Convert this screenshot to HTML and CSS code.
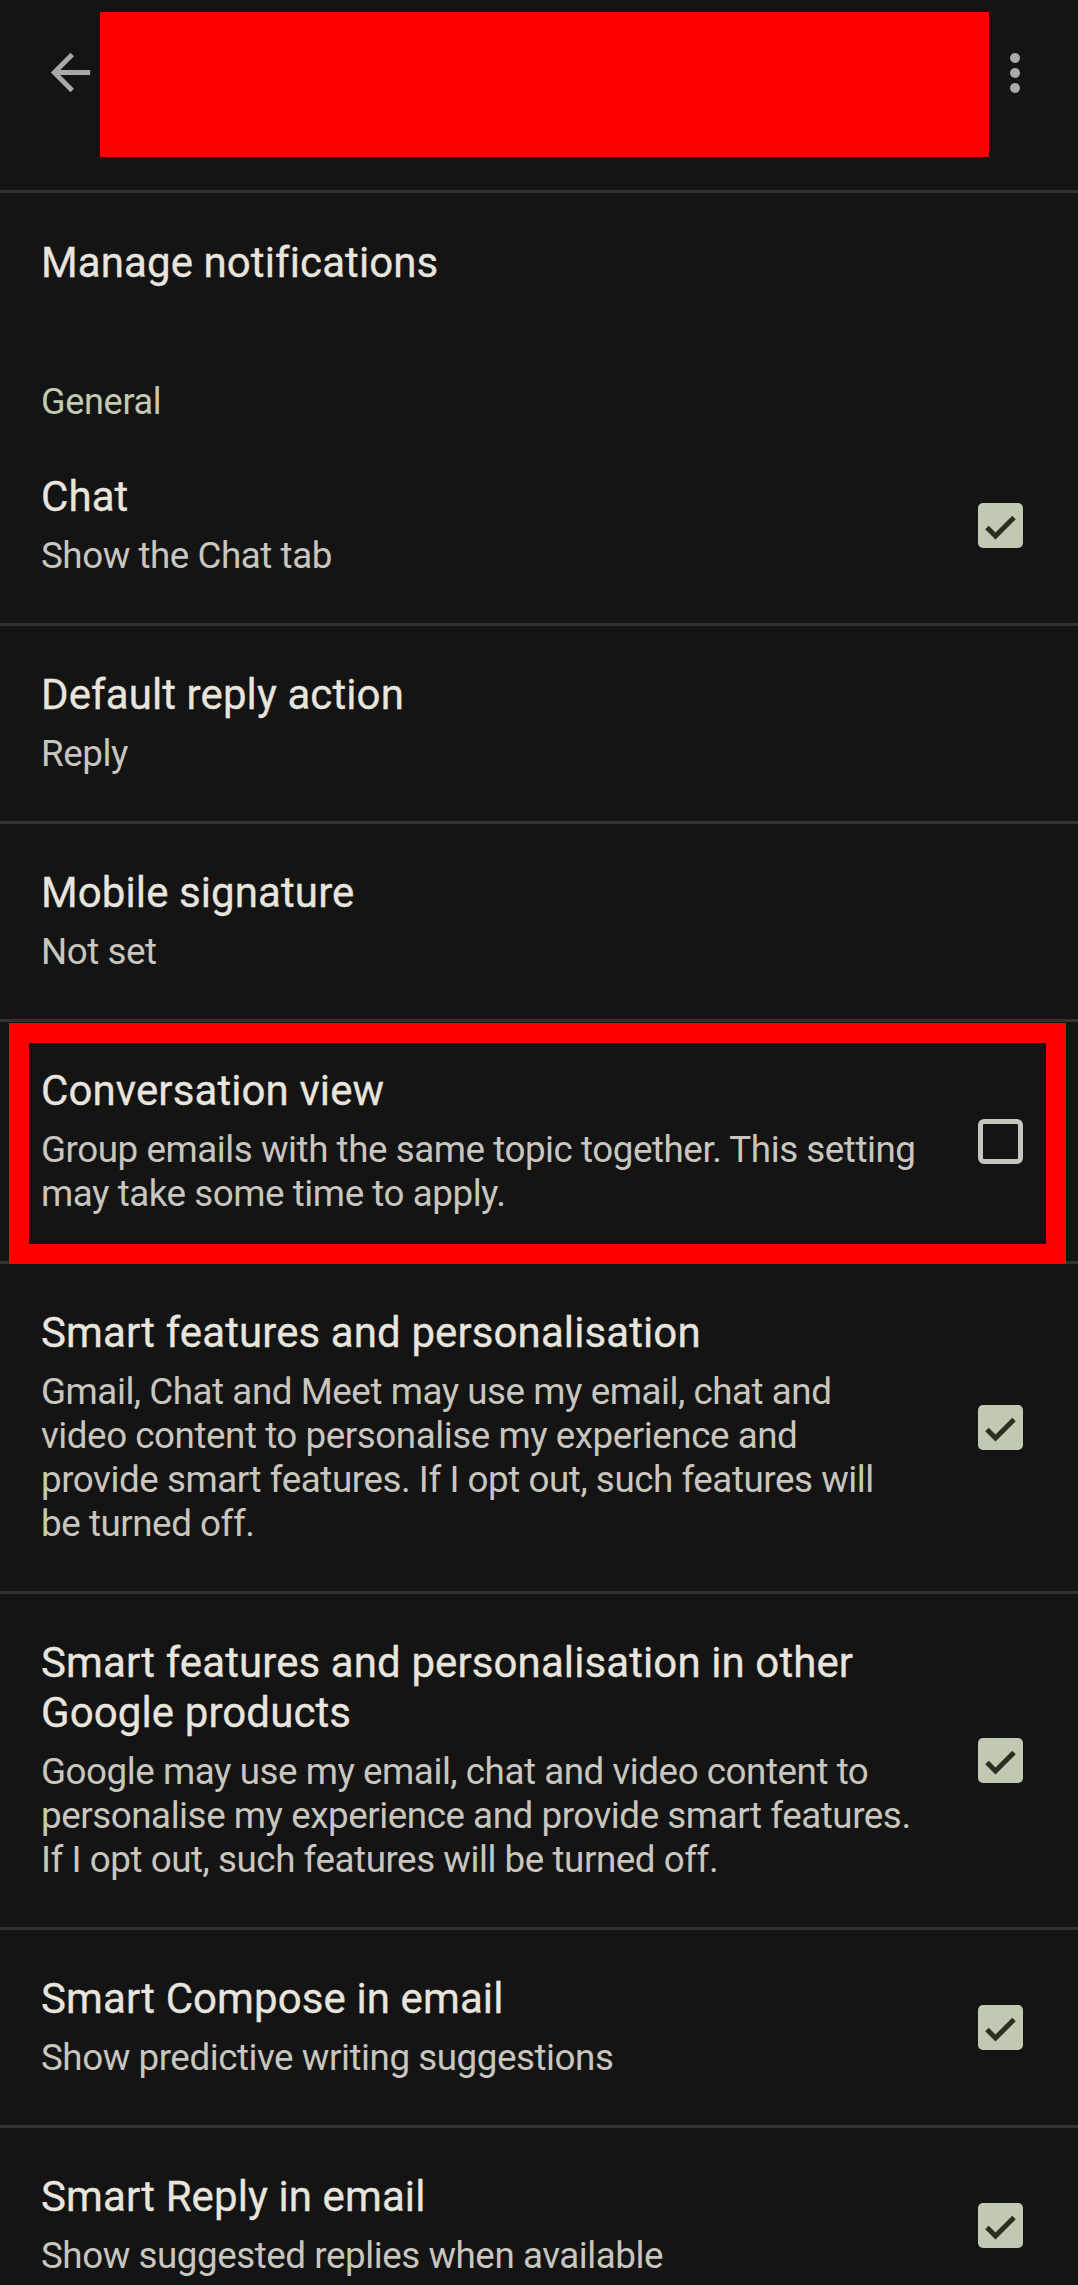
FILE: index.html
```html
<!DOCTYPE html>
<html lang="en">
<head>
<meta charset="utf-8">
<title>Settings</title>
<link rel="stylesheet" href="styles.css">
</head>
<body>
<div class="app">
  <header class="topbar">
    <svg class="icon back" viewBox="0 0 24 24" aria-hidden="true">
      <path d="M20 11H7.83l5.59-5.59L12 4l-8 8 8 8 1.41-1.41L7.83 13H20v-2z"/>
    </svg>
    <svg class="icon more" viewBox="0 0 24 24" aria-hidden="true">
      <circle cx="12" cy="6" r="2"/>
      <circle cx="12" cy="12" r="2"/>
      <circle cx="12" cy="18" r="2"/>
    </svg>
    <div class="redaction"></div>
  </header>

  <div class="pref top-pref">
    <div class="text"><div class="title">Manage notifications</div></div>
  </div>

  <div class="category">General</div>

  <div class="pref divided">
    <div class="text">
      <div class="title">Chat</div>
      <div class="summary">Show the Chat tab</div>
    </div>
    <div class="check on"><svg viewBox="0 0 45 45"><polyline points="9,24.5 17.5,33 36,14.5"/></svg></div>
  </div>

  <div class="pref divided">
    <div class="text">
      <div class="title">Default reply action</div>
      <div class="summary">Reply</div>
    </div>
  </div>

  <div class="pref divided">
    <div class="text">
      <div class="title">Mobile signature</div>
      <div class="summary">Not set</div>
    </div>
  </div>

  <div class="pref divided highlighted">
    <div class="text">
      <div class="title">Conversation view</div>
      <div class="summary">Group emails with the same topic together. This setting may take some time to apply.</div>
    </div>
    <div class="check off"></div>
    <div class="annotation"></div>
  </div>

  <div class="pref divided">
    <div class="text">
      <div class="title">Smart features and personalisation</div>
      <div class="summary">Gmail, Chat and Meet may use my email, chat and video content to personalise my experience and provide smart features. If I opt out, such features will be turned off.</div>
    </div>
    <div class="check on"><svg viewBox="0 0 45 45"><polyline points="9,24.5 17.5,33 36,14.5"/></svg></div>
  </div>

  <div class="pref divided">
    <div class="text">
      <div class="title">Smart features and personalisation in other Google products</div>
      <div class="summary">Google may use my email, chat and video content to personalise my experience and provide smart features. If I opt out, such features will be turned off.</div>
    </div>
    <div class="check on"><svg viewBox="0 0 45 45"><polyline points="9,24.5 17.5,33 36,14.5"/></svg></div>
  </div>

  <div class="pref divided">
    <div class="text">
      <div class="title">Smart Compose in email</div>
      <div class="summary">Show predictive writing suggestions</div>
    </div>
    <div class="check on"><svg viewBox="0 0 45 45"><polyline points="9,24.5 17.5,33 36,14.5"/></svg></div>
  </div>

  <div class="pref divided">
    <div class="text">
      <div class="title">Smart Reply in email</div>
      <div class="summary">Show suggested replies when available</div>
    </div>
    <div class="check on"><svg viewBox="0 0 45 45"><polyline points="9,24.5 17.5,33 36,14.5"/></svg></div>
  </div>
</div>
</body>
</html>
```

FILE: styles.css
```css
* { box-sizing: border-box; }

html, body {
  margin: 0;
  padding: 0;
  background: #141414;
}

body {
  width: 1078px;
  height: 2285px;
  overflow: hidden;
  font-family: Roboto, "Liberation Sans", sans-serif;
}

.app {
  width: 1078px;
}

.topbar {
  position: relative;
  height: 193px;
  display: flex;
  justify-content: space-between;
  align-items: flex-start;
  padding: 43px 33px 0 41px;
  border-bottom: 3px solid #323232;
}

.icon {
  width: 59px;
  height: 59px;
  fill: #a9a9a9;
}

.icon.more {
  width: 60px;
  height: 60px;
}

.redaction {
  position: absolute;
  left: 100px;
  top: 12px;
  width: 889px;
  height: 145px;
  background: #ff0000;
}

.pref {
  position: relative;
  display: flex;
  align-items: center;
  gap: 58px;
  padding: 44px 55px 45px 41px;
}

.pref.divided {
  border-bottom: 3px solid #323232;
}

.pref.top-pref {
  padding-top: 45px;
  padding-bottom: 44px;
}

.text {
  flex: 1;
  min-width: 0;
}

.title {
  font-size: 42px;
  line-height: 50px;
  color: #e8e5de;
  letter-spacing: 0.1px;
  -webkit-text-stroke: 0.3px #e8e5de;
}

.summary {
  margin-top: 12px;
  font-size: 36.75px;
  line-height: 44px;
  letter-spacing: -0.45px;
  color: #c8c6bf;
}

.category {
  padding: 48px 41px 4px;
  font-size: 36px;
  line-height: 44px;
  letter-spacing: -0.3px;
  color: #c2cab2;
}

.check {
  flex: none;
  width: 45px;
  height: 45px;
  border-radius: 5px;
}

.check.on {
  background: #c2c9b2;
}

.check.on svg {
  display: block;
  width: 45px;
  height: 45px;
}

.check.on polyline {
  fill: none;
  stroke: #283022;
  stroke-width: 5px;
}

.check.off {
  border: 5.5px solid #c6c5bd;
  border-radius: 6px;
}

.annotation {
  position: absolute;
  left: 9px;
  top: 1px;
  width: 1057px;
  height: 241px;
  border: 20px solid #ff0000;
  pointer-events: none;
}
```
